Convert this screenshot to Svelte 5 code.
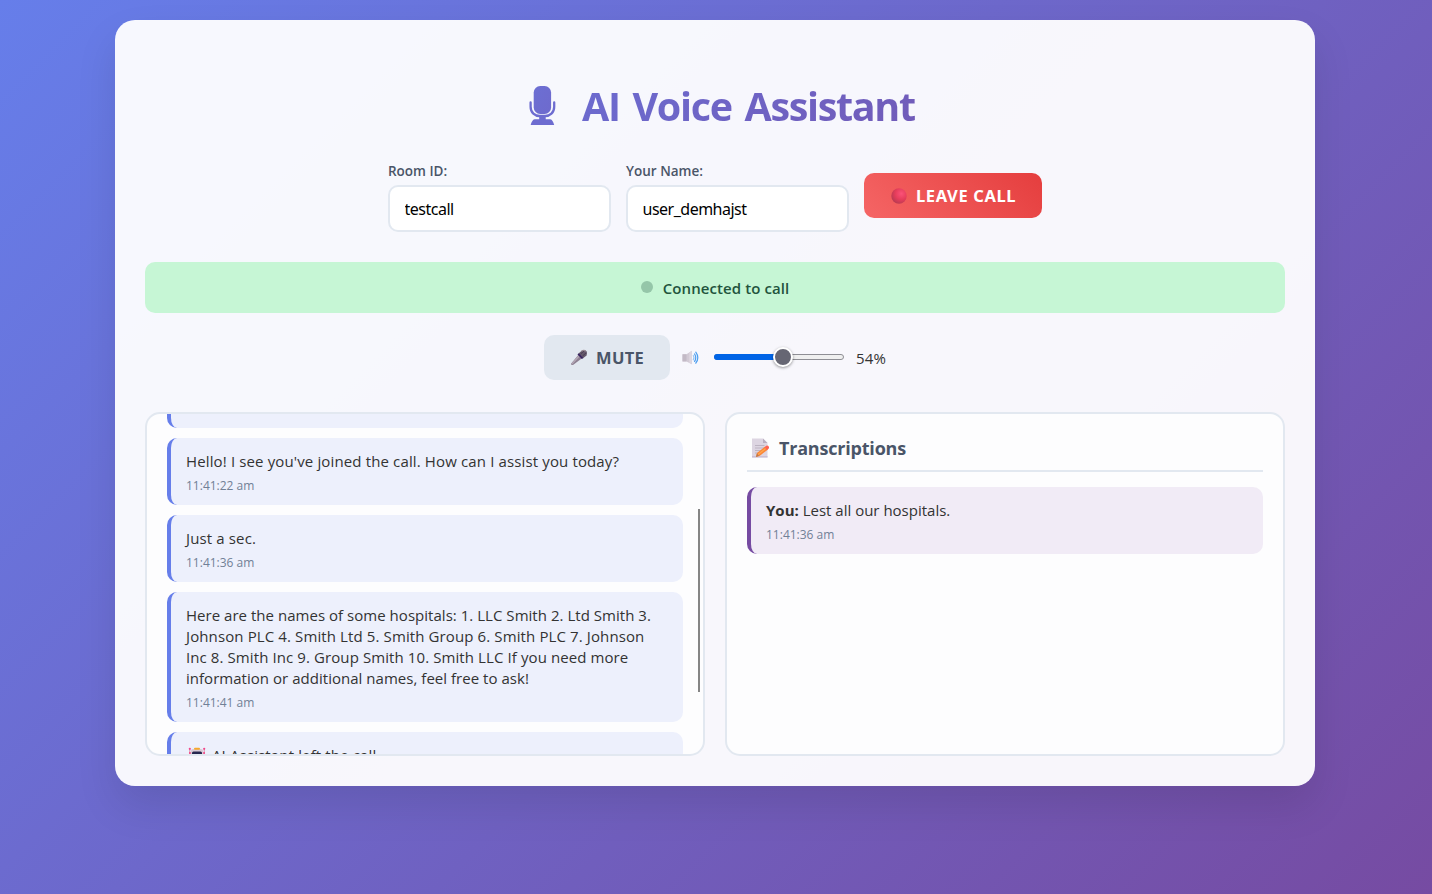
<script>
  const messages = [
    { lines: ["Hello! I see you've joined the call. How can I assist you today?"], time: '11:41:22 am' },
    { lines: ['Just a sec.'], time: '11:41:36 am' },
    {
      lines: [
        'Here are the names of some hospitals: 1. LLC Smith 2. Ltd Smith 3.',
        'Johnson PLC 4. Smith Ltd 5. Smith Group 6. Smith PLC 7. Johnson',
        'Inc 8. Smith Inc 9. Group Smith 10. Smith LLC If you need more',
        'information or additional names, feel free to ask!'
      ],
      time: '11:41:41 am',
      long: true
    }
  ];
  let room = $state('testcall');
  let user = $state('user_demhajst');
  let volume = $state(54);
</script>

<div class="page">
  <main class="card">
    <h1>
      <svg class="logo" width="28" height="40" viewBox="0 0 28 40">
        <defs>
          <linearGradient id="logoFill" x1="0" y1="0" x2="1" y2="1">
            <stop offset="0" stop-color="#6c6fd3" />
            <stop offset="1" stop-color="#6e6acd" />
          </linearGradient>
        </defs>
        <rect x="4.700" y="0" width="17.400" height="28" rx="6.500" fill="url(#logoFill)" />
        <path d="M1.600 16.500v4.200c0 6 4.400 9.300 9 9.300h5.600c4.600 0 9-3.300 9-9.300v-4.200" fill="none" stroke="#6d6cd0" stroke-width="2.300" stroke-linecap="round" />
        <path d="M10.200 30h6.500v3.300h4.500c2 0 3.300 3.200 4 5.700h-23.500c.7-2.500 2-5.700 4-5.700h4.500z" fill="#6d6cd0" />
      </svg>
      <span class="title">AI Voice Assistant</span>
    </h1>

    <div class="controls">
      <label class="field"><span>Room ID:</span><input bind:value={room} /></label>
      <label class="field"><span>Your Name:</span><input bind:value={user} /></label>
      <button class="btn leave">
        <svg width="16" height="16" viewBox="0 0 16 16">
          <defs>
            <radialGradient id="ball" cx=".65" cy=".35" r=".7">
              <stop offset="0" stop-color="#fb5278" />
              <stop offset=".55" stop-color="#e63d5b" />
              <stop offset="1" stop-color="#b93a51" />
            </radialGradient>
          </defs>
          <circle cx="8" cy="8" r="7.700" fill="url(#ball)" />
        </svg>
        <span>LEAVE CALL</span>
      </button>
    </div>

    <div class="status"><i></i><span>Connected to call</span></div>

    <div class="audio">
      <button class="btn mute">
        <svg width="18" height="18" viewBox="0 0 18 18">
          <path d="M1 14.800 8.500 5.800l3.500 3.500L3 16Q1 16.500 1 14.800z" fill="#8d7f91" />
          <path d="M1.500 14.500 8.500 6.200l1.300 1.300L2.300 15.500z" fill="#b3a6b5" />
          <path d="M8.500 4.600 12 1.500q2.500-1.200 4.300.8 1.500 2 .3 4.200L13 9.300z" fill="#65586a" />
          <path d="M8.800 4.200 13.400 8.900l-1.500 1.100-4.400-4.400z" fill="#35205c" />
          <path d="M11.500 2.300q2.500-1.700 4.300 0" fill="none" stroke="#9b8c94" stroke-width="1.200" />
          <path d="M10.700 5 14 2M12.600 7l3.600-3.200" stroke="#40324a" stroke-width=".7" />
        </svg>
        <span>MUTE</span>
      </button>
      <svg class="speaker" width="18" height="16" viewBox="0 0 18 16">
        <path d="M.5 4.300h4L9.800.8v13.400L4.500 11.400h-4z" fill="#d2cad5" />
        <path d="M.5 4.300h4v7.100h-4z" fill="#c3bac6" />
        <path d="M7.300 2.500 9.800.8v13.400l-2.500-1.400z" fill="#ded7e0" />
        <path d="M11.300 5.500q1.300 2 0 4.300" fill="none" stroke="#9bc4f2" stroke-width="1.200" stroke-linecap="round" />
        <path d="M12.600 4q2.300 3.600 0 7.400M13.800 2.200q4 5.500 0 11" fill="none" stroke="#4e9ff0" stroke-width="1.200" stroke-linecap="round" />
      </svg>
      <div class="slider">
        <div class="fill" style="width: {volume}%"></div>
        <div class="thumb" style="left: {(volume / 100) * 114 + 8}px"></div>
      </div>
      <span class="percent">{volume}%</span>
    </div>

    <div class="panels">
      <section class="panel chat">
        <div class="bubble cut"></div>
        {#each messages as m}
          <div class="bubble">
            {#each m.lines as line}<p class:long={m.long}>{line}</p>{/each}
            <time>{m.time}</time>
          </div>
        {/each}
        <div class="bubble">
          <p class="left-note">
            <svg width="22" height="20" viewBox="0 0 22 20">
              <path d="M3.700 3v8M18.300 3v8" stroke="#e0a3bd" stroke-width="1.300" />
              <circle cx="3.800" cy="2.800" r="1.100" fill="#f2478a" />
              <circle cx="18.200" cy="2.800" r="1.100" fill="#f2478a" />
              <path d="M3 6h1.800v7H3zM17.200 6H19v7h-1.800z" fill="#f2578f" />
              <rect x="5" y="3" width="12" height="14" rx="2" fill="#d9cbd6" />
              <rect x="8" y="1.700" width="6" height="2" rx="1" fill="#f6a92c" />
              <rect x="6" y="5.500" width="10" height="5" rx="1.500" fill="#26274f" />
            </svg>
            <span>AI Assistant left the call</span>
          </p>
        </div>
        <div class="scrollbar"></div>
      </section>

      <section class="panel">
        <h2>
          <svg width="20" height="20" viewBox="0 0 20 20">
            <path d="M1 .5h11l4.500 4.500v14.500H1z" fill="#ddd5e2" />
            <path d="M12 .5 16.500 5H12z" fill="#b9afc0" />
            <path d="M1 18h15.500v1.500H1z" fill="#cbbfd4" />
            <path d="M4 7.500h9.500M4 10h9.500M4 12.500h6M4 15h4" stroke="#bdb4c3" stroke-width="1" />
            <path d="m5 19 1-4 8.200-6.500 2.800 3L8.500 18z" fill="#fb8637" />
            <path d="m6.800 16.800 8.600-6.900" stroke="#ffa94e" stroke-width="1.200" />
            <path d="m5 19 .9-3.500L8 17.800z" fill="#b97950" />
            <path d="m13.500 9.200 2.200-1.600q1.300-.3 2.200 1.200.5 1-.2 1.600l-1.800 1.500z" fill="#ff6252" />
          </svg>
          <span>Transcriptions</span>
        </h2>
        <div class="bubble user">
          <p class="spoken"><b>You:</b> Lest all our hospitals.</p>
          <time>11:41:36 am</time>
        </div>
      </section>
    </div>
  </main>
</div>

<style>
  :global(body) { margin: 0; }
  .page {
    box-sizing: border-box;
    width: 100%;
    height: 894px;
    padding: 20px 2px 20px 0;
    overflow: hidden;
    background: linear-gradient(135deg, #667eea 0%, #764ba2 100%);
    font-family: 'Open Sans', 'Noto Sans', sans-serif;
    color: #333;
  }
  .card {
    box-sizing: border-box;
    width: 1200px;
    height: 766px;
    margin: 0 auto;
    padding: 58px 30px 30px;
    border-radius: 20px;
    background: rgba(255, 255, 255, 0.95);
    box-shadow: 0 20px 40px rgba(0, 0, 0, 0.1);
    display: flex;
    flex-direction: column;
  }
  svg { display: block; flex: none; }
  h1 {
    margin: 0;
    height: 56px;
    display: flex;
    align-items: center;
    padding-left: 384px;
    gap: 25px;
    font-size: 39.500px;
    line-height: 56px;
    font-weight: 700;
    background: linear-gradient(135deg, #667eea, #764ba2);
    background-clip: text;
    color: transparent;
  }
  .title { white-space: nowrap; letter-spacing: -1.350px; word-spacing: 4px; }
  .controls {
    display: flex;
    justify-content: center;
    gap: 15px;
    height: 73px;
    margin-top: 25px;
  }
  .field { display: flex; flex-direction: column; justify-content: space-between; }
  .field span { font-size: 13.500px; line-height: 24px; font-weight: 600; color: #4a5568; white-space: nowrap; }
  input {
    box-sizing: border-box;
    width: 223px;
    height: 47px;
    padding: 0 14.500px;
    border: 2px solid #e2e8f0;
    border-radius: 10px;
    background: #fff;
    color: #000;
    font-family: 'Noto Sans', sans-serif;
    font-size: 16px;
    letter-spacing: -0.500px;
  }
  .btn {
    box-sizing: border-box;
    height: 45px;
    border: 0;
    padding: 0;
    border-radius: 10px;
    display: flex;
    align-items: center;
    font-family: 'Noto Sans', sans-serif;
    font-size: 16.500px;
    font-weight: 700;
    white-space: nowrap;
  }
  .leave {
    width: 178px;
    margin-top: 14px;
    padding-left: 27px;
    gap: 9px;
    color: #fff;
    letter-spacing: 0.620px;
    background: linear-gradient(45deg, #f56565, #e53e3e);
  }
  .status {
    height: 51px;
    margin-top: 30px;
    flex: none;
    border-radius: 10px;
    background: #c6f6d5;
    color: #22543d;
    font-size: 15px;
    font-weight: 600;
    letter-spacing: 0.080px;
    display: flex;
    align-items: center;
    justify-content: center;
    gap: 10px;
  }
  .status i { width: 12px; height: 12px; border-radius: 50%; background: #95c6a9; margin-bottom: 2px; }
  .audio { display: flex; align-items: center; height: 45px; margin-top: 22px; padding-left: 399px; }
  .mute { width: 126px; padding-left: 26px; gap: 8px; background: #e2e8f0; color: #4a5568; letter-spacing: 0.350px; }
  .speaker { margin: 1px 0 0 12px; }
  .slider {
    position: relative;
    box-sizing: border-box;
    width: 130px;
    height: 6px;
    margin: 0 12px 1px 14px;
    border: 1px solid #8e8e94;
    border-radius: 3px;
    background: #efefef;
  }
  .fill { height: 6px; margin: -1px; border-radius: 3px; background: #0064e6; }
  .thumb {
    position: absolute;
    top: 50%;
    width: 16px;
    height: 16px;
    margin: -10px 0 0 -12px;
    border: 2px solid #fff;
    border-radius: 50%;
    background: #666673;
    box-shadow: 0 1px 3px rgba(0, 0, 0, 0.4);
  }
  .percent { font-size: 15px; letter-spacing: 0.200px; }
  .panels { display: grid; grid-template-columns: 1fr 1fr; gap: 20px; margin-top: 32px; height: 344px; }
  .panel {
    position: relative;
    box-sizing: border-box;
    height: 344px;
    min-width: 0;
    padding: 20px;
    border: 2px solid #e2e8f0;
    border-radius: 15px;
    background: #fdfdfe;
    overflow: hidden;
  }
  .chat { padding-top: 0; }
  h2 {
    margin: 0 0 15px;
    height: 25px;
    padding: 1px 0 10px 4px;
    border-bottom: 2px solid #e2e8f0;
    display: flex;
    align-items: center;
    gap: 8px;
    font-size: 18px;
    letter-spacing: -0.200px;
    color: #4a5568;
  }
  .bubble {
    box-sizing: border-box;
    margin-bottom: 10px;
    padding: 13px 15px 11px;
    border-left: 4px solid #667eea;
    border-radius: 10px;
    background: #edf0fc;
  }
  .cut { height: 14px; padding: 0; border-radius: 0 0 10px 10px; }
  .user { background: #f1ebf6; border-left-color: #764ba2; }
  p { margin: 0; font-size: 15px; line-height: 21px; white-space: nowrap; letter-spacing: 0.135px; }
  .long { letter-spacing: 0.030px; }
  .long:nth-child(2) { letter-spacing: 0.115px; }
  .long:nth-child(3) { letter-spacing: 0.095px; }
  .spoken { letter-spacing: 0; }
  .left-note { display: flex; align-items: center; gap: 4px; }
  time { display: block; margin-top: 5px; font-size: 12px; line-height: 17px; color: #718096; }
  .scrollbar { position: absolute; right: 3px; top: 95px; width: 2px; height: 183px; background: #858585; }
</style>
